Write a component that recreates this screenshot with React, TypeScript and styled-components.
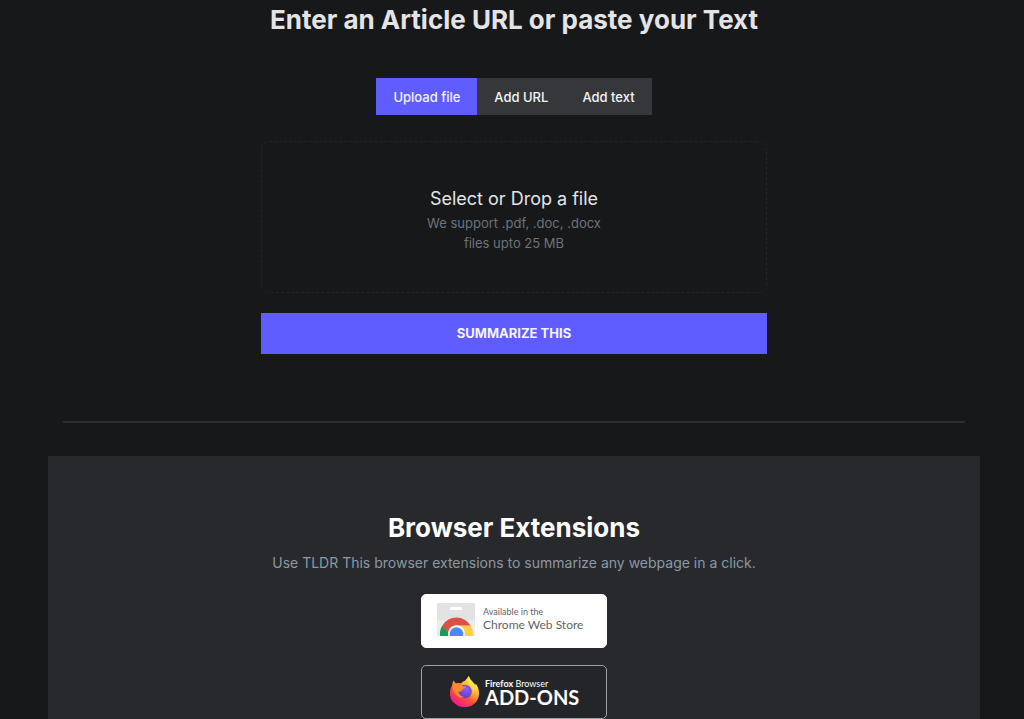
import React, { useState } from "react";
import styled, { createGlobalStyle } from "styled-components";

const GlobalStyle = createGlobalStyle`
  *, *::before, *::after { box-sizing: border-box; }
  body {
    margin: 0;
    background: #17181a;
    color: #e4e4e6;
    font-family: Inter, "Liberation Sans", sans-serif;
  }
  h1, h2, p { margin: 0; }
`;

const Page = styled.main`
  padding: 0 44px 0 48px;
`;

const Summarizer = styled.section`
  display: flex;
  flex-direction: column;
  align-items: center;
  padding: 3px 15px 67px;
`;

const Title = styled.h1<{ $bright?: boolean }>`
  font-size: 26px;
  line-height: 34px;
  font-weight: 700;
  text-align: center;
  color: ${(p) => (p.$bright ? "#ffffff" : "#e4e4e6")};
`;

const Tabs = styled.div`
  display: flex;
  margin-top: 41px;
  background: #36373a;
`;

const Tab = styled.button<{ $active: boolean }>`
  height: 37px;
  padding: 0 17px;
  border: 0;
  background: ${(p) => (p.$active ? "#5f5dff" : "transparent")};
  color: #f4f4f6;
  font: 500 13px/20px Inter, "Liberation Sans", sans-serif;
  cursor: pointer;
`;

const Form = styled.form`
  width: 100%;
  max-width: 506px;
  margin-top: 26px;
  display: flex;
  flex-direction: column;
  gap: 20px;
`;

const DropZone = styled.label`
  display: flex;
  flex-direction: column;
  align-items: center;
  padding: 43px 20px 39px;
  border: 1px dashed #222426;
  border-radius: 8px;
  text-align: center;
  cursor: pointer;
`;

const FileInput = styled.input`
  position: absolute;
  width: 1px;
  height: 1px;
  opacity: 0;
`;

const DropTitle = styled.span`
  font-size: 18px;
  line-height: 28px;
  color: #e4e4e6;
`;

const DropHint = styled.span`
  max-width: 180px;
  font-size: 13px;
  line-height: 20px;
  color: #6a747d;
`;

const Submit = styled.button`
  height: 41px;
  padding: 0 20px 2px;
  border: 0;
  background: #5f5dff;
  color: #f4f4f6;
  font: 700 13px/20px Inter, "Liberation Sans", sans-serif;
  text-transform: uppercase;
  cursor: pointer;
`;

const Divider = styled.hr`
  height: 2px;
  margin: 0 15px 33px;
  border: 0;
  background: #2d2e30;
`;

const Extensions = styled.section`
  display: flex;
  flex-direction: column;
  align-items: center;
  padding: 55px 20px 1px;
  background: #28292c;
`;

const Lead = styled.p`
  margin-top: 8px;
  font-size: 14px;
  line-height: 20px;
  text-align: center;
  color: #8b98a5;
`;

const BadgeList = styled.div`
  display: flex;
  flex-direction: column;
  gap: 17px;
  margin-top: 21px;
`;

const Badge = styled.a<{ $dark?: boolean }>`
  display: flex;
  align-items: center;
  gap: ${(p) => (p.$dark ? 5 : 8)}px;
  width: 186px;
  height: 54px;
  padding: ${(p) => (p.$dark ? "0 0 2px 27px" : "0 0 4px 15px")};
  border: 1px solid ${(p) => (p.$dark ? "#a0a1a3" : "#ffffff")};
  border-radius: 5px;
  background: ${(p) => (p.$dark ? "#242529" : "#ffffff")};
  color: ${(p) => (p.$dark ? "#ffffff" : "#5f6368")};
  font-family: Lato, Inter, sans-serif;
  text-decoration: none;
  white-space: nowrap;
`;

const BadgeText = styled.span`
  display: flex;
  flex-direction: column;
  padding-top: 2px;
`;

const BadgeSmall = styled.span`
  font-size: 9px;
  line-height: 10px;
`;

const StoreName = styled.span`
  font-size: 12px;
  line-height: 16px;
`;

const AddonsName = styled.span`
  font-size: 20px;
  line-height: 16px;
  font-weight: 700;
`;

function ChromeStoreIcon() {
  return (
    <svg width="38" height="33" viewBox="0 0 38 33" aria-hidden="true">
      <path d="M0 1Q0 0 1 0H37Q38 0 38 1V33H0Z" fill="#ebebeb" />
      <path d="M0 1Q0 0 1 0H37Q38 0 38 1V17H0Z" fill="#e3e3e3" />
      <rect x="13" y="4" width="12" height="3" rx="1.5" fill="#ffffff" />
      <path d="M5.4 22.4A16.5 16.5 0 0 0 3 33H14L12 31Z" fill="#169c5b" />
      <path d="M19.5 22.5H33.6A16.5 16.5 0 0 1 35.9 33H24Z" fill="#ffcd40" />
      <path d="M5.4 22.4A16.5 16.5 0 0 1 33.6 22.5H19.5Q12.5 23 11.3 31Z" fill="#dd5044" />
      <path d="M11.3 33A8.5 8.5 0 1 1 27.7 33Z" fill="#f4f4f4" />
      <path d="M13 33A6.8 6.8 0 1 1 26 33Z" fill="#4a8af4" />
    </svg>
  );
}

function FirefoxIcon() {
  return (
    <svg width="31" height="32" viewBox="0 0 31 32" aria-hidden="true">
      <defs>
        <linearGradient id="flame" x1="25" y1="3" x2="7" y2="29" gradientUnits="userSpaceOnUse">
          <stop offset="0" stopColor="#fff44f" />
          <stop offset="0.35" stopColor="#ffb52e" />
          <stop offset="0.65" stopColor="#ff5438" />
          <stop offset="1" stopColor="#f01889" />
        </linearGradient>
        <linearGradient id="tail" x1="21" y1="1" x2="26" y2="27" gradientUnits="userSpaceOnUse">
          <stop offset="0" stopColor="#fff65a" />
          <stop offset="0.5" stopColor="#ffd83a" />
          <stop offset="1" stopColor="#ff7139" stopOpacity="0" />
        </linearGradient>
        <radialGradient id="globe" cx="0.6" cy="0.3" r="0.7">
          <stop offset="0" stopColor="#9059ff" />
          <stop offset="1" stopColor="#5b42c4" />
        </radialGradient>
      </defs>
      <path
        d="M4.6 5.5Q5.7 8 7.5 8.6Q10 7.8 12 8.5Q13.5 6.3 16 5.8Q18 3.5 19.8 1Q20.3 4.5 23.7 6.9Q25.5 8.5 26.3 10.8L26.8 8.8Q30.5 13.7 30 19.2A14.4 13.5 0 0 1 1 18Q.7 13.6 3.2 10.2Q3.3 7.5 4.6 5.5Z"
        fill="url(#flame)"
      />
      <path d="M19.8 1Q20.3 4.5 23.7 6.9Q25.5 8.5 26.3 10.8L26.8 8.8Q31 15 29 22Q26 27 22 25Q26 18 22 12Q18.5 8 19.8 1Z" fill="url(#tail)" />
      <circle cx="16" cy="16.5" r="6.8" fill="url(#globe)" />
      <path d="M4.6 5.5Q5.7 8 7.5 8.6Q10 7.8 12 8.5Q12.3 10.2 14 11.4H17.2Q17 13.2 13.8 14.2Q13 17.4 9.2 16.4Q10.5 21 15 21.8Q11 24 7 20Q2 15 4.6 5.5Z" fill="#ff8a2b" />
    </svg>
  );
}

const tabs = ["Upload file", "Add URL", "Add text"];

export default function App() {
  const [active, setActive] = useState(tabs[0]);

  return (
    <>
      <GlobalStyle />
      <Page>
        <Summarizer>
          <Title>Enter an Article URL or paste your Text</Title>
          <Tabs role="tablist">
            {tabs.map((name) => (
              <Tab
                key={name}
                type="button"
                role="tab"
                aria-selected={name === active}
                $active={name === active}
                onClick={() => setActive(name)}
              >
                {name}
              </Tab>
            ))}
          </Tabs>
          <Form onSubmit={(e) => e.preventDefault()}>
            <DropZone htmlFor="document">
              <FileInput id="document" type="file" accept=".pdf,.doc,.docx" />
              <DropTitle>Select or Drop a file</DropTitle>
              <DropHint>We support .pdf, .doc, .docx files upto 25 MB</DropHint>
            </DropZone>
            <Submit type="submit">Summarize this</Submit>
          </Form>
        </Summarizer>
        <Divider />
        <Extensions>
          <Title as="h2" $bright>Browser Extensions</Title>
          <Lead>Use TLDR This browser extensions to summarize any webpage in a click.</Lead>
          <BadgeList>
            <Badge href="#chrome">
              <ChromeStoreIcon />
              <BadgeText>
                <BadgeSmall>Available in the</BadgeSmall>
                <StoreName>Chrome Web Store</StoreName>
              </BadgeText>
            </Badge>
            <Badge href="#firefox" $dark>
              <FirefoxIcon />
              <BadgeText>
                <BadgeSmall><b>Firefox</b> Browser</BadgeSmall>
                <AddonsName>ADD-ONS</AddonsName>
              </BadgeText>
            </Badge>
          </BadgeList>
        </Extensions>
      </Page>
    </>
  );
}
